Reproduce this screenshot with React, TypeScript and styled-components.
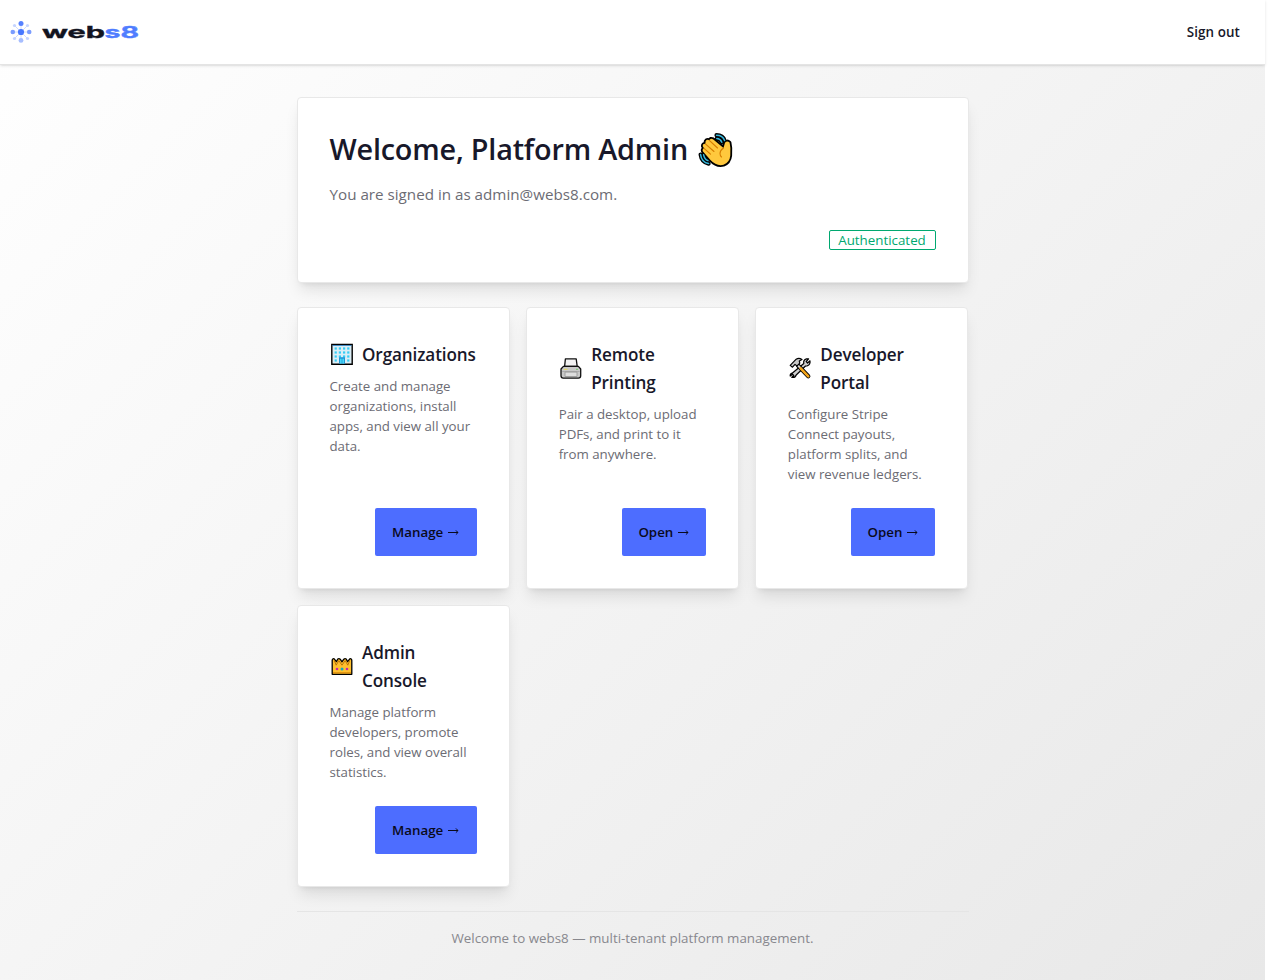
import React from "react";
import styled, { createGlobalStyle } from "styled-components";

const GlobalStyle = createGlobalStyle`
  *, *::before, *::after { box-sizing: border-box; }
  body {
    margin: 0;
    background: #fff;
    font-family: "Open Sans", "Noto Sans", sans-serif;
    color: #18181f;
    overflow: hidden;
  }
  h1, h2, p { margin: 0; }
`;

const Page = styled.div`
  width: 1265px;
  height: 980px;
  display: flex;
  flex-direction: column;
  background: linear-gradient(135deg, #ffffff 0%, #e8e8e8 100%);
`;

const Header = styled.header`
  height: 65px;
  flex: none;
  display: flex;
  align-items: center;
  justify-content: space-between;
  padding: 0 25px 1px 8px;
  background: #fff;
  border-bottom: 1px solid #e4e4e4;
  box-shadow: 0 1px 3px rgba(0, 0, 0, 0.1), 0 1px 2px -1px rgba(0, 0, 0, 0.1);
`;

const SignOut = styled.button`
  border: 0;
  padding: 1px 0 0;
  background: none;
  font: 600 13.4px/20px "Open Sans", sans-serif;
  letter-spacing: 0.1px;
  color: #18182a;
`;

const Main = styled.main`
  width: 672px;
  margin: 32px auto 0;
  display: flex;
  flex-direction: column;
  gap: 24px;
`;

const Card = styled.section`
  display: flex;
  flex-direction: column;
  padding: 32px;
  background: #fff;
  border: 1px solid #e8e8e8;
  border-radius: 4px;
  box-shadow: 0 10px 15px -3px rgba(0, 0, 0, 0.1), 0 4px 6px -4px rgba(0, 0, 0, 0.1);
`;

const Heading = styled.h1`
  display: flex;
  align-items: center;
  gap: 10.5px;
  height: 40px;
  padding-bottom: 2px;
  font-size: 28.8px;
  line-height: 38px;
  font-weight: 600;
  letter-spacing: -0.2px;
  white-space: nowrap;
  color: #18182a;

  svg { margin-top: 1px; }
`;

const Lead = styled.p`
  margin-top: 12px;
  font-size: 15.2px;
  line-height: 25px;
  height: 24px;
  color: #6c6c74;
`;

const Badge = styled.span`
  align-self: flex-end;
  width: 107px;
  height: 20px;
  margin-top: 24px;
  border: 1px solid #00a870;
  border-radius: 2px;
  text-align: center;
  font-size: 13.35px;
  line-height: 19px;
  color: #00a870;
`;

const Grid = styled.div`
  display: grid;
  width: 671.5px;
  grid-template-columns: repeat(3, minmax(0, 1fr));
  gap: 16px;
`;

const CardTitle = styled.h2`
  display: flex;
  align-items: center;
  gap: 8.5px;
  font-size: 17.1px;
  line-height: 28px;
  font-weight: 600;
  letter-spacing: -0.1px;
  color: #18182a;

  svg { flex: none; }
  span { padding-top: 1px; margin-bottom: -1px; }
`;

const CardText = styled.p`
  margin: 8px 0 24px;
  font-size: 13.3px;
  line-height: 20px;
  letter-spacing: -0.02px;
  white-space: pre;
  color: #6c6c74;
`;

const ActionButton = styled.button<{ $width: number }>`
  align-self: flex-end;
  width: ${(p) => p.$width}px;
  height: 48px;
  flex: none;
  margin-top: auto;
  display: flex;
  align-items: center;
  justify-content: center;
  gap: 4px;
  padding: 0 0 1px;
  border: 0;
  border-radius: 2px;
  background: #4d6dff;
  font: 600 13.3px/20px "Open Sans", sans-serif;
  color: #0a0a1c;
`;

const Footer = styled.footer`
  border-top: 1px solid #e5e5e5;
  padding-top: 16px;
  text-align: center;
  font-size: 13.35px;
  line-height: 20px;
  color: #88888e;
`;

const Logo = () => (
  <svg width="136" height="32" viewBox="8 16 136 32" aria-label="webs8">
    <g stroke="#c8d6ff" strokeWidth="0.9">
      <path d="M21 23.5V40.5M12.5 32H29.5M14.5 25.5L27.5 38.5M27.5 25.5L14.5 38.5" />
    </g>
    <g fill="#c5d4ff">
      <circle cx="14.5" cy="25.5" r="1.6" />
      <circle cx="27.5" cy="25.5" r="1.6" />
      <circle cx="14.5" cy="38.5" r="1.6" />
      <circle cx="27.5" cy="38.5" r="1.6" />
    </g>
    <circle cx="21" cy="23.6" r="2.5" fill="#5681ff" />
    <circle cx="12.8" cy="32" r="2.3" fill="#7a9cff" />
    <circle cx="29.2" cy="32" r="2.3" fill="#7a9cff" />
    <circle cx="21" cy="40.4" r="2.4" fill="#a7beff" />
    <circle cx="21" cy="32" r="3.1" fill="#4777ff" />
    <g fontFamily="Inter, sans-serif" fontSize="16.5" fontWeight="700" strokeWidth="0.35">
      <text x="42" y="37.8" textLength="63" lengthAdjust="spacingAndGlyphs" fill="#12141f" stroke="#12141f">web</text>
      <text x="104.5" y="37.8" textLength="34.5" lengthAdjust="spacingAndGlyphs" fill="#4f7dff" stroke="#4f7dff">s8</text>
    </g>
  </svg>
);

const handPath =
  "M12.5 28L5 19.5Q3.8 17.5 6 16.3L4.8 14.2Q4.6 11.6 7.4 11.8L7.6 9.2Q9 7 11.3 8.3Q12.4 5.8 15 7.2L25.5 16L27 10.8Q29 8.2 31.6 10.5L32.4 16L32.3 23.5Q31.6 30.5 25.5 32.8Q18.5 34.5 12.5 28Z";
const motionPath = "M18.5 3.2Q24.8 3.2 26.6 8.6M18.8 6.6Q22.3 6.8 23.8 10.2M2.6 22.6Q3.6 30.4 10.6 31.6M5.6 22.8Q6.4 27.2 10 28.6";

const WavingHand = () => (
  <svg width="36" height="36" viewBox="0 0 36 36" fill="none" strokeLinecap="round" strokeLinejoin="round">
    <path d={motionPath} stroke="#000" strokeWidth="4.2" />
    <path d={handPath} stroke="#000" strokeWidth="3.6" />
    <path d={motionPath} stroke="#35b8dd" strokeWidth="1.5" />
    <path d={handPath} fill="#ffc83d" />
    <path d="M6 16.3L12.5 22.2M7.4 11.8L16 19.5M11.3 8.3L19.5 16M25.5 16Q22 18.5 22 21.5Q22 23.5 23.5 25" stroke="#d67d00" strokeWidth="1.1" />
  </svg>
);

const Building = () => (
  <svg width="24" height="24" viewBox="0 0 24 24">
    <path d="M1.8 2.5H22.2V22.2H1.8Z" fill="#dceef6" stroke="#000" strokeWidth="1.4" />
    <path d="M2.5 3.5H21.5" stroke="#2a83c9" strokeWidth="0.8" />
    <g fill="#35cdf5">
      {[5.4, 9.4, 13.4].map((y) =>
        [4.6, 8.8, 13, 17.2].map((x) => <rect key={`${x}-${y}`} x={x} y={y} width="2.2" height="2.2" />)
      )}
      <rect x="4.6" y="17.4" width="2.2" height="2.2" />
      <rect x="17.2" y="17.4" width="2.2" height="2.2" />
    </g>
    <path d="M9 15.2H15V21.6H9Z" fill="#2196d6" />
    <path d="M10.2 16.7H11.5V21.5H10.2ZM12.5 16.7H13.8V21.5H12.5Z" fill="#50e6ff" />
  </svg>
);

const Printer = () => (
  <svg width="24" height="24" viewBox="0 0 24 24" stroke="#111" strokeWidth="1.3" strokeLinejoin="round">
    <path d="M5.6 10.4L6.4 2.9H17.2L18.2 10.4Z" fill="#f2f2f2" />
    <path d="M4.4 10.4H19.4L21.7 13V19.8Q21.7 22.2 19.4 22.2H4.2Q2 22.2 2 19.8V13Z" fill="#c9c9c9" />
    <path d="M3.2 15.5H20.6" stroke="#a2a2a2" strokeWidth="0.8" />
    <path d="M6 16.1H18V20.5H6Z" fill="#dedede" stroke="#929292" strokeWidth="0.8" />
    <path d="M5 13.3H8.5" stroke="#e8dc55" strokeWidth="1" />
    <path d="M17 13.3H19" stroke="#73c86b" strokeWidth="1" />
  </svg>
);

const Tools = () => (
  <svg width="24" height="24" viewBox="0 0 24 24" fill="none" strokeLinecap="round" strokeLinejoin="round">
    <path
      d="M4.2 17.2L15.8 7.5Q15 3.8 18.5 2.8L20.6 2.8L18.2 5.5L19.6 7L22 4.8Q22.5 8.5 19.3 9.8L17.5 10L8.2 19Q7.2 22 3.8 21.3L5.8 19.5L4.7 18.3L2.2 20Q2 17.8 4.2 17.2Z"
      fill="#d0d0d0" stroke="#000" strokeWidth="1.2"
    />
    <path d="M10 9.5L20.3 20.3" stroke="#000" strokeWidth="4.2" />
    <path d="M10 9.5L13 12.6" stroke="#d5d5d5" strokeWidth="2" />
    <path d="M12.7 12.3L20.3 20.3" stroke="#f3a51b" strokeWidth="2.6" />
    <path d="M2.2 9.4L8.2 3.2Q10.8 1.5 14 3.4L11.3 5L11.8 7.2L9 10L7 8.4L4.5 11.2Z" fill="#c9c9c9" stroke="#000" strokeWidth="1.2" />
  </svg>
);

const Crown = () => (
  <svg width="24" height="24" viewBox="0 0 24 24" strokeLinejoin="round">
    <path
      d="M2.2 20.3V6.4Q2.4 4.2 4.2 4.8L6.4 7.6L7.8 5Q9 4.1 10.2 5.2L12 7.8L13.8 5.2Q15 4.1 16.2 5L17.6 7.6L19.8 4.8Q21.6 4.2 21.8 6.4V20.3Z"
      fill="#ffc02e" stroke="#000" strokeWidth="1.3"
    />
    <path d="M4.3 6.6L6.2 11.2L8.8 6.6L12 11.2L15.2 6.6L17.8 11.2L19.7 6.6" fill="none" stroke="#a86200" strokeWidth="0.8" />
    <path d="M3 18.8H21" stroke="#d27c00" strokeWidth="0.9" />
    <circle cx="7" cy="15" r="1.3" fill="#c428aa" />
    <circle cx="12" cy="15" r="1.5" fill="#16a9bd" />
    <circle cx="17" cy="15" r="1.3" fill="#c428aa" />
  </svg>
);

const Arrow = () => (
  <svg width="12" height="8" viewBox="0 0 12 8" fill="none" stroke="#0a0a1c" strokeWidth="1">
    <path d="M1 4.5H11M8.9 2.4L11 4.5L8.9 6.6" />
  </svg>
);

const apps = [
  {
    title: "Organizations",
    icon: <Building />,
    text: "Create and manage\norganizations, install\napps, and view all your\ndata.",
    action: "Manage",
    width: 102,
  },
  {
    title: "Remote Printing",
    icon: <Printer />,
    text: "Pair a desktop, upload\nPDFs, and print to it\nfrom anywhere.",
    action: "Open",
    width: 84,
  },
  {
    title: "Developer Portal",
    icon: <Tools />,
    text: "Configure Stripe\nConnect payouts,\nplatform splits, and\nview revenue ledgers.",
    action: "Open",
    width: 84,
  },
  {
    title: "Admin Console",
    icon: <Crown />,
    text: "Manage platform\ndevelopers, promote\nroles, and view overall\nstatistics.",
    action: "Manage",
    width: 102,
  },
];

const GridCard = styled(Card)`
  height: 282px;
`;

export default function App() {
  return (
    <Page>
      <GlobalStyle />
      <Header>
        <Logo />
        <SignOut>Sign out</SignOut>
      </Header>
      <Main>
        <Card>
          <Heading>
            Welcome, Platform Admin <WavingHand />
          </Heading>
          <Lead>You are signed in as admin@webs8.com.</Lead>
          <Badge>Authenticated</Badge>
        </Card>
        <Grid>
          {apps.map((app) => (
            <GridCard key={app.title}>
              <CardTitle>
                {app.icon}
                <span>{app.title}</span>
              </CardTitle>
              <CardText>{app.text}</CardText>
              <ActionButton $width={app.width}>
                {app.action} <Arrow />
              </ActionButton>
            </GridCard>
          ))}
        </Grid>
        <Footer>Welcome to webs8 — multi-tenant platform management.</Footer>
      </Main>
    </Page>
  );
}
